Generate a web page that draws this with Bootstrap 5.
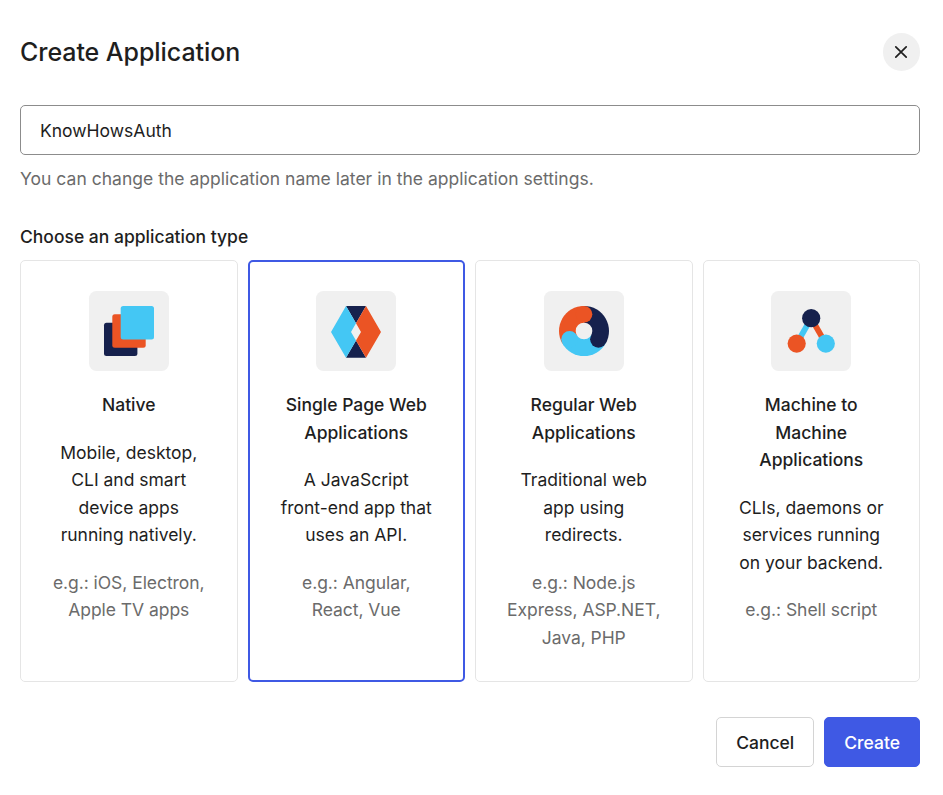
<!DOCTYPE html>
<html lang="en">
<head>
<meta charset="utf-8">
<meta name="viewport" content="width=device-width, initial-scale=1">
<title>Create Application</title>
<link href="https://cdn.jsdelivr.net/npm/bootstrap@5.3.0/dist/css/bootstrap.min.css" rel="stylesheet">
<style>
  body { font-family: Inter, "Liberation Sans", sans-serif; font-size: 17.5px; line-height: 27.5px; color: #1e1e1e; background: #fff; }
  .dialog { padding: 33px 23px 0 20px; }
  .dialog-title { font-size: 25px; line-height: 37px; padding-top: 1px; font-weight: 500; letter-spacing: -.06px; }
  .close-btn { width: 37.5px; height: 38px; background: #f0f0f0; border: 0; }
  .name-input { height: 50px; margin-top: 34px; padding: 0 19px; border: 1px solid #8c8c8c; border-radius: 5px; font-size: 17.5px; color: #1e1e1e; }
  .hint { margin-top: 10px; color: #6b6b6b; letter-spacing: .015px; }
  .type-label { margin-top: 30px; margin-bottom: 10px; font-weight: 500; }
  .types { display: grid; grid-template-columns: repeat(4, 1fr); gap: 10px; }
  .type-card { height: 422px; padding: 30px 28px; border: 1px solid #e5e5e5; border-radius: 5px; text-align: center; }
  .type-card.selected { border: 2px solid #3f59e4; padding: 29px 27px; }
  .tile { width: 80px; height: 80px; border-radius: 7.5px; background: #f0f0f0; display: block; margin: 0 auto 20px; }
  .type-card h2 { font-size: 17.5px; line-height: 27.5px; font-weight: 500; margin-bottom: 20px; }
  .type-card p { margin-bottom: 20px; }
  .type-card .eg { color: #6b6b6b; margin: 0; letter-spacing: -.05px; }
  .actions { margin-top: 35px; gap: 10px; }
  .action { height: 50px; padding: 2px 19px 0; border-radius: 5px; font-size: 17.5px; font-weight: 500; }
  .action-cancel { border: 1px solid #d4d4d4; color: #1e1e1e; background: #fff; }
  .action-create { border: 1px solid #3f59e4; background: #3f59e4; color: #fff; }
</style>
<script src="https://cdn.jsdelivr.net/npm/bootstrap@5.3.0/dist/js/bootstrap.bundle.min.js"></script>
</head>
<body>
<main class="dialog">
  <header class="d-flex justify-content-between align-items-center">
    <h1 class="dialog-title mb-0">Create Application</h1>
    <button class="close-btn rounded-circle p-0 d-flex align-items-center justify-content-center" type="button" aria-label="Close">
      <svg width="14" height="14" viewBox="0 0 14 14" fill="none" stroke="#1e1e1e" stroke-width="1.7" stroke-linecap="round"><path d="M1.8 1.8 12.2 12.2M12.2 1.8 1.8 12.2"/></svg>
    </button>
  </header>
  <input class="form-control name-input shadow-none" type="text" value="KnowHowsAuth" aria-label="Name">
  <p class="hint mb-0">You can change the application name later in the application settings.</p>
  <p class="type-label">Choose an application type</p>
  <section class="types">
    <article class="type-card">
      <svg class="tile" viewBox="0 0 80 80"><rect x="15" y="31.7" width="33.4" height="33.3" rx="2.5" fill="#16214d"/><rect x="23.3" y="23.3" width="33.4" height="33.4" rx="2.5" fill="#eb5424"/><rect x="31.7" y="15" width="33.3" height="33.4" rx="2.5" fill="#44c7f4"/></svg>
      <h2>Native</h2>
      <p>Mobile, desktop, CLI and smart device apps running natively.</p>
      <p class="eg">e.g.: iOS, Electron, Apple TV apps</p>
    </article>
    <article class="type-card selected">
      <svg class="tile" viewBox="0 0 80 80"><path d="M30 15H50L40 32.2ZM30 66.8H50L40 49.6Z" fill="#16214d"/><path d="M30 15 40 32.2 35 40.9 40 49.6 30 66.8 15 40.9Z" fill="#44c7f4"/><path d="M50 15 40 32.2 45 40.9 40 49.6 50 66.8 65 40.9Z" fill="#eb5424"/></svg>
      <h2>Single Page Web Applications</h2>
      <p>A JavaScript<br>front-end app that uses an API.</p>
      <p class="eg">e.g.: Angular, React, Vue</p>
    </article>
    <article class="type-card">
      <svg class="tile" viewBox="0 0 80 80"><path d="M40 40V15A25 25 0 0 1 61.65 52.5Z" fill="#16214d"/><path d="M40 40 61.65 52.5A25 25 0 0 1 18.35 52.5Z" fill="#44c7f4"/><path d="M40 40 18.35 52.5A25 25 0 0 1 40 15Z" fill="#eb5424"/><circle cx="40" cy="23.33" r="8.33" fill="#eb5424"/><circle cx="54.43" cy="48.33" r="8.33" fill="#16214d"/><circle cx="25.57" cy="48.33" r="8.33" fill="#44c7f4"/><circle cx="40" cy="40" r="8.33" fill="#f0f0f0"/></svg>
      <h2>Regular Web Applications</h2>
      <p>Traditional web app using redirects.</p>
      <p class="eg">e.g.: Node.js Express, ASP.NET, Java, PHP</p>
    </article>
    <article class="type-card">
      <svg class="tile" viewBox="0 0 80 80"><path d="M40.2 27.2 25.7 52.6" stroke="#44c7f4" stroke-width="5.8"/><path d="M40.2 27.2 54.8 52.6" stroke="#eb5424" stroke-width="5.8"/><circle cx="40.2" cy="27.2" r="9.1" fill="#16214d"/><circle cx="25.7" cy="52.6" r="9.1" fill="#eb5424"/><circle cx="54.8" cy="52.6" r="9.1" fill="#44c7f4"/></svg>
      <h2>Machine to Machine Applications</h2>
      <p>CLIs, daemons or services running on your backend.</p>
      <p class="eg">e.g.: Shell script</p>
    </article>
  </section>
  <footer class="actions d-flex justify-content-end">
    <button type="button" class="btn action action-cancel">Cancel</button>
    <button type="button" class="btn action action-create">Create</button>
  </footer>
</main>
</body>
</html>
